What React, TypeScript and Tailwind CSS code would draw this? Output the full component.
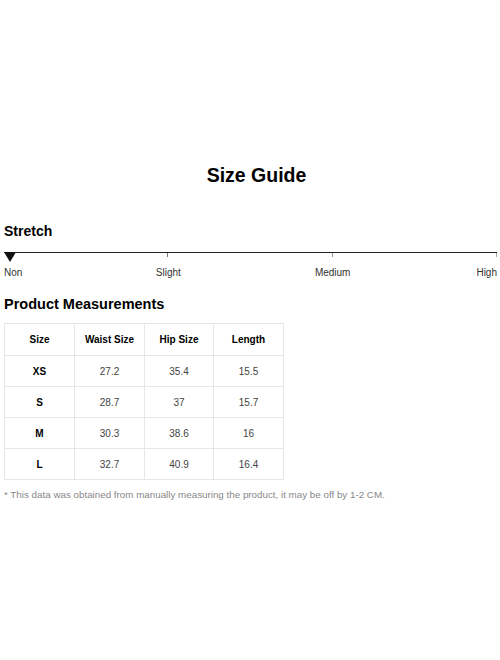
import React from "react";

const rows = [
  ["XS", "27.2", "35.4", "15.5"],
  ["S", "28.7", "37", "15.7"],
  ["M", "30.3", "38.6", "16"],
  ["L", "32.7", "40.9", "16.4"],
];

export default function App() {
  return (
    <div
      className="w-[500px] h-[660px] bg-white text-black px-[4px]"
      style={{ fontFamily: '"Liberation Sans", Arial, sans-serif' }}
    >
      <div className="pt-[163px] pl-[13px] text-center text-[19.5px] leading-[24px] font-bold">Size Guide</div>
      <div className="mt-[35px] text-[14px] leading-[18px] font-bold">Stretch</div>
      <div className="mt-[12px] w-[493px] flex flex-col">
        <div className="relative grid grid-cols-3 h-[5px] border-t border-[#222]">
          <div className="border-r border-[#777]" />
          <div className="border-r border-[#999]" />
          <div className="border-r border-[#aaa]" />
          <svg className="absolute left-0 -top-px" width="12" height="11" viewBox="0 0 12 11">
            <polygon points="0,0 12,0 6,10" fill="#111" />
          </svg>
        </div>
        <div className="mt-[10px] grid grid-cols-6 text-[10px] leading-[12px] text-[#333]">
          <span className="text-left">Non</span>
          <span className="col-span-2 text-center">Slight</span>
          <span className="col-span-2 text-center">Medium</span>
          <span className="text-right">High</span>
        </div>
      </div>
      <div className="mt-[16px] text-[14.5px] leading-[18px] font-bold">Product Measurements</div>
      <div className="mt-[10px] w-[280px] border border-[#e6e6e6]">
        <div className="grid grid-cols-[69px_70px_69px_70px] h-[31px] text-[10px] font-bold">
          {["Size", "Waist Size", "Hip Size", "Length"].map((h, i) => (
            <div key={h} className={`flex items-center justify-center ${i > 0 ? "border-l border-[#e6e6e6]" : ""}`}>{h}</div>
          ))}
        </div>
        {rows.map((r) => (
          <div key={r[0]} className="grid grid-cols-[69px_70px_69px_70px] h-[31px] border-t border-[#e6e6e6] text-[10px]">
            {r.map((c, i) => (
              <div
                key={i}
                className={`flex items-center justify-center ${i === 0 ? "font-bold text-black" : "border-l border-[#e6e6e6] text-[#444]"}`}
              >
                {c}
              </div>
            ))}
          </div>
        ))}
      </div>
      <div className="mt-[9px] text-[9.8px] leading-[12px] text-[#888]">
        * This data was obtained from manually measuring the product, it may be off by 1-2 CM.
      </div>
    </div>
  );
}
